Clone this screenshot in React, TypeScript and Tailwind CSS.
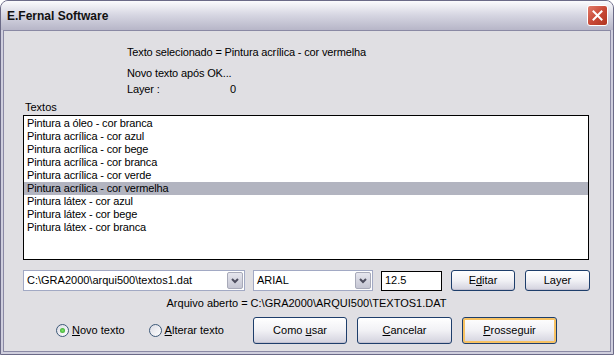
import React from "react";

const items = [
  "Pintura a óleo - cor branca",
  "Pintura acrílica - cor azul",
  "Pintura acrílica - cor bege",
  "Pintura acrílica - cor branca",
  "Pintura acrílica - cor verde",
  "Pintura acrílica - cor vermelha",
  "Pintura látex - cor azul",
  "Pintura látex - cor bege",
  "Pintura látex - cor branca",
];

const SELECTED = 5;

// --- small XP-style widgets ---
function XpButton({
  children,
  width,
  height,
  hot = false,
}: {
  children: React.ReactNode;
  width: string;
  height: string;
  hot?: boolean;
}) {
  return (
    <div
      className={`${width} ${height} shrink-0 rounded-[3px] border border-[#1e3e6b] bg-gradient-to-b from-white via-[#f1f1f5] to-[#d3d2de] flex items-center justify-center ${
        hot ? "shadow-[inset_0_0_0_2px_#f7c263]" : "shadow-[inset_0_-1px_0_#c2c1d0]"
      }`}
    >
      <span className="text-[11px] leading-none text-black">{children}</span>
    </div>
  );
}

function Combo({ value, width }: { value: string; width: string }) {
  return (
    <div className={`${width} h-[21px] shrink-0 border border-[#a2a9c4] bg-white flex items-center`}>
      <span className="flex-1 pl-[3px] text-[11px] leading-none text-black">{value}</span>
      <div className="w-[16px] h-[17px] mr-[1px] rounded-[2px] border border-[#a8aab9] bg-gradient-to-b from-[#e6e6ee] to-[#c5c6d3] flex items-center justify-center">
        <svg width="8" height="6" viewBox="0 0 8 6">
          <path d="M1 1 L4 4 L7 1" stroke="#4d4d5e" strokeWidth="2" fill="none" />
        </svg>
      </div>
    </div>
  );
}

function Radio({ checked, children }: { checked?: boolean; children: React.ReactNode }) {
  return (
    <div className="flex items-center gap-[3px]">
      <div className="w-[13px] h-[13px] rounded-full border border-[#3c5878] bg-gradient-to-br from-[#dcdce4] to-white flex items-center justify-center">
        {checked && (
          <div className="w-[5px] h-[5px] rounded-full bg-[radial-gradient(circle,#7ee36c,#2a9e1e)]" />
        )}
      </div>
      <span className="text-[11px] leading-none text-black">{children}</span>
    </div>
  );
}

export default function App() {
  return (
    <div
      className="w-[614px] h-[355px] flex flex-col rounded-t-[8px] border border-[#6b6a87] bg-[#cfcedd] overflow-hidden"
      style={{ fontFamily: '"Liberation Sans", Arial, sans-serif' }}
    >
      {/* Title bar */}
      <div className="h-[29px] shrink-0 flex items-center justify-between pl-[6px] pr-[5px] bg-gradient-to-b from-[#fbfbfd] via-[#d5d5e1] to-[#b7b6c8]">
        <span className="text-[12px] font-bold text-[#111]">E.Fernal Software</span>
        <div className="w-[21px] h-[21px] rounded-[3px] border border-white bg-gradient-to-br from-[#e07b6a] via-[#c94a38] to-[#b0341f] flex items-center justify-center">
          <svg width="11" height="11" viewBox="0 0 11 11">
            <path d="M1.5 1.5 L9.5 9.5 M9.5 1.5 L1.5 9.5" stroke="white" strokeWidth="2" strokeLinecap="square" />
          </svg>
        </div>
      </div>

      {/* Client area */}
      <div className="flex-1 mx-[2px] mb-[2px] border border-[#8a89a4] bg-[#e0dfe3] pl-[19px] flex flex-col">
        <div className="pl-[104px] mt-[15px] text-[11px] leading-[13px] tracking-[-0.15px] text-black">
          <div>Texto selecionado = Pintura acrílica - cor vermelha</div>
          <div className="mt-[8px]">Novo texto após OK...</div>
          <div className="mt-[3px] flex">
            <span className="w-[103px]">Layer :</span>
            <span>0</span>
          </div>
        </div>

        <div className="mt-[5px] pl-[2px] text-[11px] leading-[13px] text-black">Textos</div>

        {/* List box */}
        <div className="mt-[1px] w-[566px] h-[145px] border border-black bg-white pt-[1px]">
          {items.map((t, i) => (
            <div
              key={t}
              className={`h-[13px] pl-[3px] text-[11px] leading-[13px] tracking-[-0.15px] text-black ${
                i === SELECTED ? "bg-[#b2b4c0]" : ""
              }`}
            >
              {t}
            </div>
          ))}
        </div>

        {/* Controls row */}
        <div className="mt-[10px] flex items-center">
          <Combo value="C:\GRA2000\arqui500\textos1.dat" width="w-[222px]" />
          <div className="ml-[8px]">
            <Combo value="ARIAL" width="w-[120px]" />
          </div>
          <div className="ml-[8px] w-[61px] h-[20px] border border-black bg-white flex items-center pl-[3px]">
            <span className="text-[11px] leading-none text-black">12.5</span>
          </div>
          <div className="ml-[9px]">
            <XpButton width="w-[64px]" height="h-[21px]">
              E<span className="underline">d</span>itar
            </XpButton>
          </div>
          <div className="ml-[10px]">
            <XpButton width="w-[65px]" height="h-[21px]">Layer</XpButton>
          </div>
        </div>

        <div className="mt-[6px] pr-[20px] text-center text-[11px] leading-[13px] text-black">
          Arquivo aberto = C:\GRA2000\ARQUI500\TEXTOS1.DAT
        </div>

        {/* Bottom row */}
        <div className="mt-[7px] flex items-center">
          <div className="ml-[33px]">
            <Radio checked>
              <span className="underline">N</span>ovo texto
            </Radio>
          </div>
          <div className="ml-[24px]">
            <Radio>
              <span className="underline">A</span>lterar texto
            </Radio>
          </div>
          <div className="ml-auto mr-[53px] flex gap-[10px]">
            <XpButton width="w-[94px]" height="h-[27px]">
              Como <span className="underline">u</span>sar
            </XpButton>
            <XpButton width="w-[95px]" height="h-[27px]">
              <span className="underline">C</span>ancelar
            </XpButton>
            <XpButton width="w-[95px]" height="h-[27px]" hot>
              <span className="underline">P</span>rosseguir
            </XpButton>
          </div>
        </div>
      </div>
    </div>
  );
}
